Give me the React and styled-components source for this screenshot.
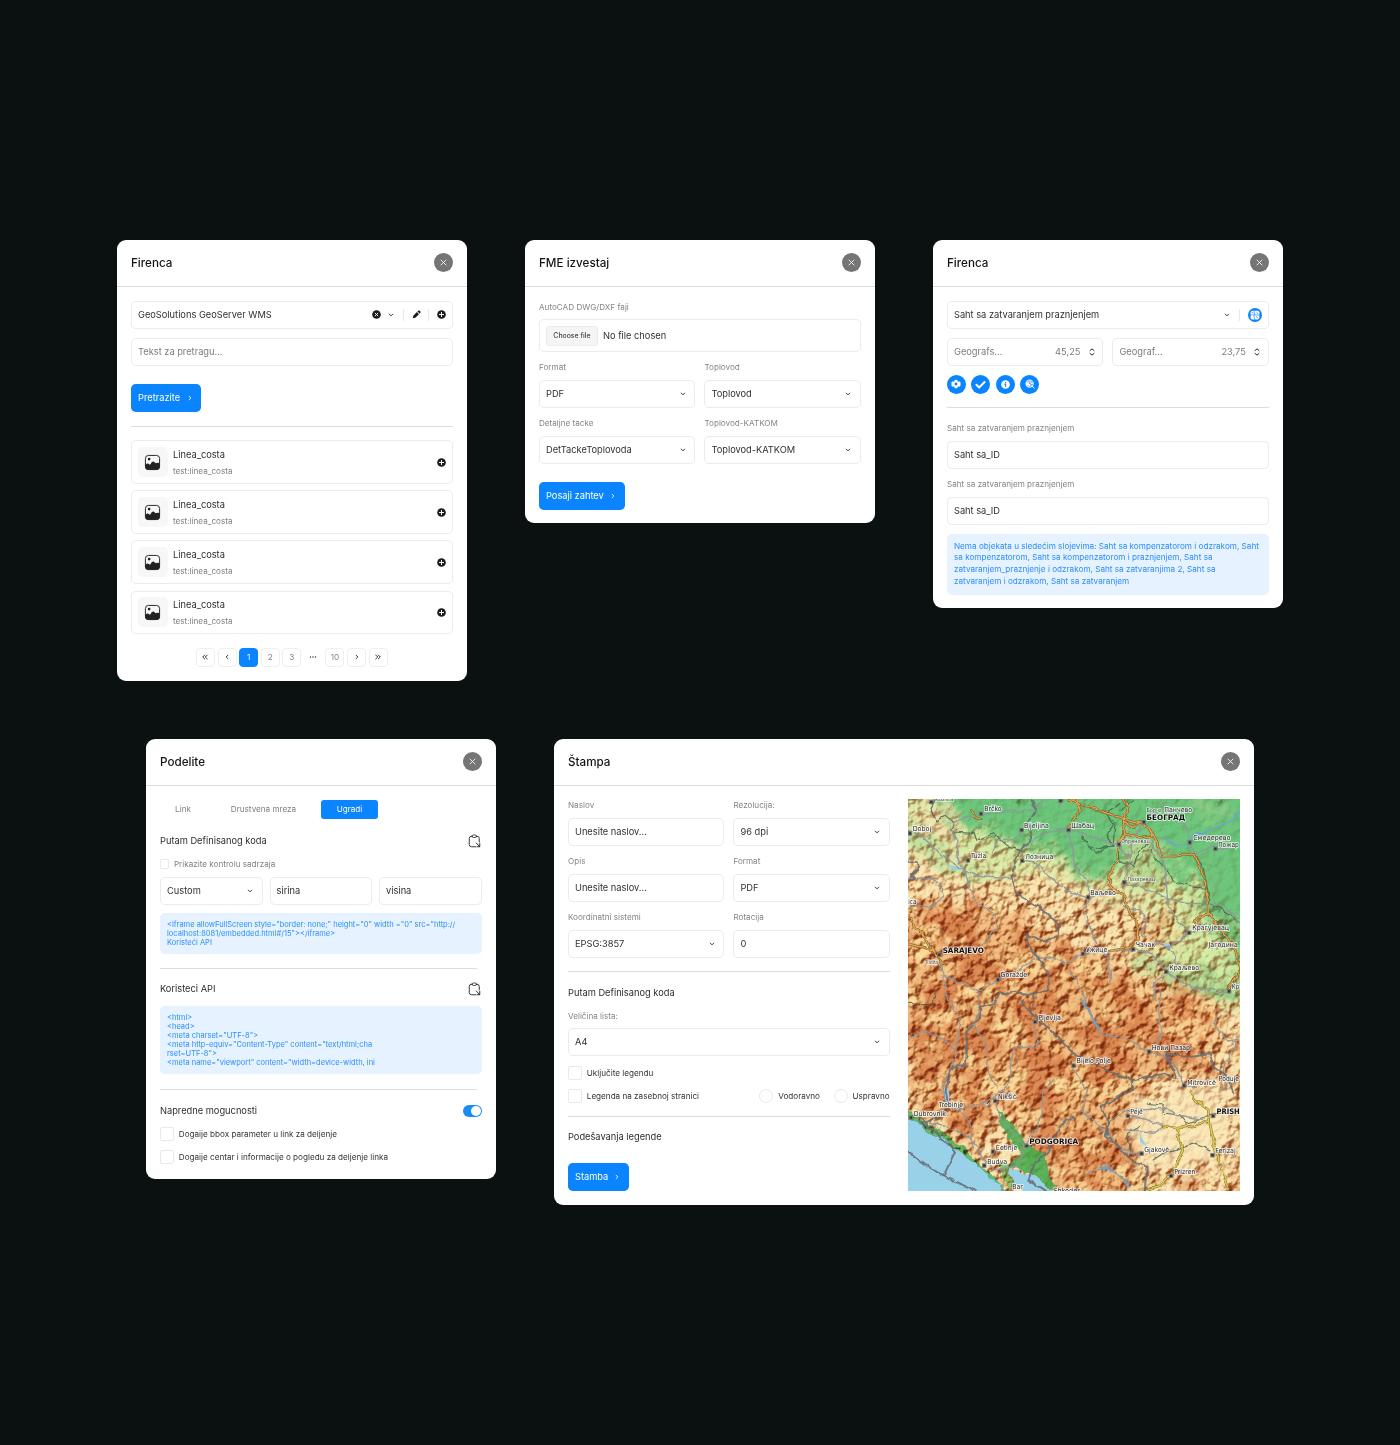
import React from "react";
import styled, { createGlobalStyle, css } from "styled-components";

const Global = createGlobalStyle`
  *, *::before, *::after { box-sizing: border-box; }
  body { margin: 0; background: #0b1011; }
  #root { font-family: Inter, "Liberation Sans", sans-serif; color: #333; }
`;

/* ---------- layout ---------- */
const Page = styled.main`
  width: 1400px;
  height: 1445px;
  padding-top: 240px;
  display: flex;
  flex-direction: column;
  gap: 58.5px;
  background: #0b1011;
  overflow: hidden;
`;
const Row = styled.section`
  display: flex;
  align-items: flex-start;
  gap: 58.4px;
  padding-left: ${(p) => p.$left}px;
`;
const Card = styled.article`
  width: ${(p) => p.$w || 349.6}px;
  height: ${(p) => p.$h}px;
  flex: none;
  background: #fff;
  border-radius: 9px;
`;
const Header = styled.header`
  height: 46.5px;
  padding: 0 14px;
  display: flex;
  align-items: center;
  justify-content: space-between;
  border-bottom: 1px solid #dcdcdc;
`;
const Title = styled.h2`
  margin: 0;
  font-size: 11.67px;
  line-height: 16px;
  font-weight: 500;
  color: #151515;
`;
const Body = styled.div`
  padding: 14px 14px 0;
  display: flex;
  flex-direction: column;
`;
const Columns = styled.div`
  display: grid;
  grid-template-columns: repeat(${(p) => p.$n || 2}, 1fr);
  column-gap: ${(p) => p.$gap || 9.3}px;
  row-gap: 9.33px;
  margin-top: ${(p) => p.$mt || 0}px;
`;
const Divider = styled.hr`
  border: 0;
  height: 1px;
  width: ${(p) => p.$w || "100%"};
  margin: ${(p) => p.$m || "14px 0"};
  background: #dcdcdc;
  flex: none;
`;
const Line = styled.div`
  display: flex;
  align-items: center;
  justify-content: ${(p) => (p.$spread ? "space-between" : "flex-start")};
  gap: ${(p) => p.$gap || 0}px;
  height: ${(p) => p.$h}px;
  margin-top: ${(p) => p.$mt || 0}px;
`;

/* ---------- form parts ---------- */
const Label = styled.div`
  height: 12px;
  margin-bottom: 6.67px;
  font-size: 8.14px;
  line-height: 12px;
  color: #858585;
  white-space: nowrap;
`;
const Box = styled.div`
  height: ${(p) => p.$h || 28}px;
  margin-top: ${(p) => p.$mt || 0}px;
  padding: 0 ${(p) => p.$pr || 8.5}px 0 6px;
  display: flex;
  align-items: center;
  border: 1px solid #ebebeb;
  border-radius: 4.7px;
  font-size: 9.27px;
  line-height: 14px;
  white-space: nowrap;
  color: ${(p) => (p.$muted ? "#7c7c7c" : "#303030")};
`;
const Grow = styled.span`
  flex: 1;
`;
const Value = styled.span`
  margin-right: 7.2px;
`;
const VRule = styled.i`
  width: 1px;
  height: 12px;
  background: #e9e9e9;
  margin: ${(p) => p.$m};
`;
const Spacer = styled.i`
  width: ${(p) => p.$w}px;
`;
const Button = styled.button`
  align-self: flex-start;
  width: ${(p) => p.$w}px;
  height: 28px;
  margin-top: ${(p) => p.$mt}px;
  padding: 0 8.5px 0 7px;
  border: 0;
  border-radius: 4.7px;
  background: #0a84ff;
  color: #fff;
  font: 400 9.27px/14px Inter, sans-serif;
  display: flex;
  align-items: center;
  justify-content: space-between;
  white-space: nowrap;
`;
const FileButton = styled.span`
  width: 52px;
  height: 20px;
  margin-right: 5px;
  border: 1px solid #ececec;
  border-radius: 2.5px;
  background: #f5f5f5;
  font-size: 6.9px;
  font-weight: 500;
  line-height: 18px;
  text-align: center;
  color: #444;
`;
const Heading = styled.h3`
  margin: 0;
  font-size: 9.27px;
  line-height: 14px;
  font-weight: 400;
  color: #2d2d2d;
  white-space: nowrap;
`;
const Small = styled.span`
  font-size: 8.14px;
  line-height: 12px;
  white-space: nowrap;
  color: ${(p) => (p.$muted ? "#7f7f7f" : "#333")};
`;
const Check = styled.i`
  width: ${(p) => p.$s || 14}px;
  height: ${(p) => p.$s || 14}px;
  flex: none;
  border: 1px solid #e9e9e9;
  border-radius: ${(p) => (p.$round ? "50%" : "2px")};
  margin-left: ${(p) => p.$ml || 0}px;
`;
const Info = styled.div`
  height: ${(p) => p.$h}px;
  margin-top: ${(p) => p.$mt}px;
  padding: 7px;
  border-radius: 4.7px;
  background: #e6f2ff;
  color: #2a8fff;
  font-size: ${(p) => p.$fs}px;
  line-height: ${(p) => p.$lh}px;
  white-space: pre;
`;
const Round = styled.span`
  width: ${(p) => p.$s}px;
  height: ${(p) => p.$s}px;
  flex: none;
  border: 0;
  padding: 0;
  border-radius: 50%;
  display: flex;
  align-items: center;
  justify-content: center;
  background: ${(p) => p.$bg || "#0a84ff"};
`;

/* ---------- result list ---------- */
const List = styled.div`
  display: flex;
  flex-direction: column;
  gap: 6.2px;
`;
const Item = styled.div`
  height: 43.9px;
  padding: 0 6px;
  display: flex;
  align-items: center;
  border: 1px solid #ebebeb;
  border-radius: 4.7px;
`;
const Thumb = styled.span`
  width: 30px;
  height: 30px;
  margin-right: 5px;
  padding-right: 1px;
  border-radius: 5px;
  background: #f7f7f7;
  display: flex;
  align-items: center;
  justify-content: center;
`;
const ItemText = styled.div`
  flex: 1;
  display: flex;
  flex-direction: column;
  gap: 4px;
  font-size: 9.27px;
  line-height: 13px;
  color: #2d2d2d;
`;

/* ---------- pager ---------- */
const Pager = styled.nav`
  display: flex;
  justify-content: center;
  gap: 2.6px;
  margin-top: 13.3px;
`;
const PageButton = styled.span`
  width: 19px;
  height: 19px;
  border-radius: 4px;
  border: 1px solid #efefef;
  font-size: 8.14px;
  color: #858585;
  display: flex;
  align-items: center;
  justify-content: center;
  ${(p) =>
    p.$active &&
    css`
      background: #0a84ff;
      border-color: #0a84ff;
      color: #fff;
    `}
  ${(p) =>
    p.$plain &&
    css`
      border-color: transparent;
    `}
`;

/* ---------- tabs and toggle ---------- */
const Tabs = styled.div`
  display: flex;
  height: 19px;
`;
const Tab = styled.span`
  width: ${(p) => p.$w}px;
  border-radius: 3px;
  font-size: 8.14px;
  line-height: 19px;
  text-align: center;
  white-space: nowrap;
  color: ${(p) => (p.$active ? "#fff" : "#7f7f7f")};
  background: ${(p) => (p.$active ? "#0a84ff" : "transparent")};
`;
const Toggle = styled.span`
  width: 19px;
  height: 12px;
  border-radius: 6px;
  padding: 1px;
  background: #1b8cf3;
  display: flex;
  justify-content: flex-end;
  &::after {
    content: "";
    width: 10px;
    height: 10px;
    border-radius: 50%;
    background: #fff;
  }
`;
const Split = styled.div`
  display: flex;
  gap: 18.4px;
  padding: 13.7px 14px 0;
`;
const Side = styled.div`
  width: 321.8px;
  display: flex;
  flex-direction: column;
`;
const MapSvg = styled.svg`
  display: block;
  width: 332px;
  height: 392px;
`;
const Relief = styled.g`
  mix-blend-mode: multiply;
`;

/* ---------- icons ---------- */
const Svg = ({ s = 9, vb = 24, children, ...rest }) => (
  <svg width={s} height={s} viewBox={`0 0 ${vb} ${vb}`} fill="none" color="#222" {...rest}>
    {children}
  </svg>
);
const stroke = { stroke: "currentColor", strokeLinecap: "round", strokeLinejoin: "round" };
const Chevron = ({ turn = 0, color = "#222" }) => (
  <Svg s={6} vb={12} color={color}>
    <path d="M2.500 4.200l3.500 3.500 3.500-3.500" transform={`rotate(${turn} 6 6)`} strokeWidth="1.800" {...stroke} />
  </Svg>
);
const Double = ({ turn = 0 }) => (
  <Svg s={8} vb={14}>
    <path d="M6.500 3.500L3 7l3.500 3.500M11 3.500L7.500 7l3.500 3.500" transform={`rotate(${turn} 7 7)`} strokeWidth="1.600" {...stroke} />
  </Svg>
);
const Spinner = () => (
  <Svg s={8} vb={16}>
    <path d="M4 5.200L8 1.600l4 3.600M4 10.800L8 14.400l4-3.600" strokeWidth="2" {...stroke} />
  </Svg>
);
const PlusCircle = () => (
  <Svg s={9}>
    <circle cx="12" cy="12" r="11.500" fill="#1c1c1c" />
    <path d="M12 6.500v11M6.500 12h11" stroke="#fff" strokeWidth="2.600" strokeLinecap="round" />
  </Svg>
);
const XCircle = () => (
  <Svg s={9}>
    <circle cx="12" cy="12" r="11.500" fill="#1c1c1c" />
    <path d="M8.500 8.500l7 7M15.500 8.500l-7 7" stroke="#fff" strokeWidth="2.600" strokeLinecap="round" />
  </Svg>
);
const Pencil = () => (
  <Svg s={9}>
    <path d="M2 22l1.500-7L13 5.500l5.500 5.500L9 20.500zM14.500 4l1.800-1.800a3.200 3.200 0 0 1 4.500 0l1 1a3.200 3.200 0 0 1 0 4.500L20 9.500z" fill="#1c1c1c" />
  </Svg>
);
const Picture = () => (
  <Svg s={17} vb={30}>
    <rect x="2.500" y="2.500" width="25" height="25" rx="5.500" stroke="#222" strokeWidth="1.700" />
    <circle cx="9" cy="9" r="2.400" fill="#222" />
    <path d="M2 20c2-3 5-4 7-2 1 1 2 .5 3-1 2-4 5-5 7-2 1 1.500 2 1.500 3.500 1 2.500-1 4 0 5.500 2v4a6 6 0 0 1-6 6H8a6 6 0 0 1-6-6z" fill="#222" />
  </Svg>
);
const Clipboard = () => (
  <Svg s={14} vb={28}>
    <path d="M8 4.500H7Q2.500 4.500 2.500 9v12q0 4.500 4.500 4.500h9M16 4.500h2q4.500 0 4.500 4.500v7" strokeWidth="1.800" {...stroke} />
    <path d="M8 4.500Q8 2 10.500 2h4Q17 2 17 4.500T14.500 7h-4Q8 7 8 4.500z" strokeWidth="1.500" {...stroke} />
    <path d="M16.500 18l6.500 7M23.500 19v6.500h-5" strokeWidth="1.900" {...stroke} />
  </Svg>
);
const Gear = () => (
  <Svg s={10}>
    <path
      d="M9.500 2.500h5l.8 3 2.500 1.400 3-.9 2.400 4.300-2 1.700 2 2-2.400 4.200-3-.8-2.500 1.500-.8 2.900h-5l-.8-2.900-2.500-1.500-3 .8L.8 14l2.200-2-2.200-1.700L3.200 6l3 .9 2.500-1.400z"
      fill="#fff"
      stroke="#fff"
      strokeLinejoin="round"
    />
    <circle cx="12" cy="12" r="3.400" fill="#0a84ff" />
  </Svg>
);
const Tick = () => (
  <Svg s={11}>
    <path d="M3 12.500l6 6L21 6.500" stroke="#fff" strokeWidth="4.200" strokeLinecap="round" strokeLinejoin="round" />
  </Svg>
);
const InfoIcon = () => (
  <Svg s={9}>
    <circle cx="12" cy="12" r="11.500" fill="#fff" />
    <path d="M10 11H12.500V17.500" stroke="#0a84ff" strokeWidth="2.800" strokeLinecap="round" strokeLinejoin="round" />
    <circle cx="12.200" cy="6.600" r="1.800" fill="#0a84ff" />
  </Svg>
);
const GlobeSearch = () => (
  <Svg s={10}>
    <circle cx="11" cy="11" r="10" fill="#fff" />
    <path d="M3 6c5 0 5 5 9 5s2 4 5 5M10 1.500c-2 4 4 4 9 4M5 18c2-4 5-2 6 2M7 3l11 16M13 7l7 3" stroke="#0a84ff" strokeWidth="1.300" />
    <circle cx="17" cy="17" r="3.600" fill="#fff" stroke="#0a84ff" strokeWidth="1.500" />
    <path d="M19.500 19.500l3 3" stroke="#fff" strokeWidth="2" strokeLinecap="round" />
  </Svg>
);
const Tiles = () => (
  <Svg s={10}>
    <rect x="1.500" y="1.500" width="21" height="21" rx="4" fill="#fff" />
    <path d="M11 1c-3 4 2 5 0 9S9 18 12 23M1 12c5-2 6 1 10 0s7 1 12 0M16 6l3 3M5 6l3 1M15 16l4 3" stroke="#0a84ff" strokeWidth="1.600" strokeLinecap="round" />
  </Svg>
);

const Close = () => (
  <Round as="button" $s={19} $bg="#757575" aria-label="Zatvori">
    <Svg s={7} vb={14} color="#fff">
      <path d="M2 2l10 10M12 2L2 12" strokeWidth="1.700" {...stroke} />
    </Svg>
  </Round>
);
const CardHeader = ({ children }) => (
  <Header>
    <Title>{children}</Title>
    <Close />
  </Header>
);
const Select = ({ children, mt }) => (
  <Box $mt={mt}>
    <Grow>{children}</Grow>
    <Chevron />
  </Box>
);
const Field = ({ label, children, plain }) => (
  <div>
    <Label>{label}</Label>
    {plain ? <Box>{children}</Box> : <Select>{children}</Select>}
  </div>
);
const Action = ({ children, ...rest }) => (
  <Button {...rest}>
    {children}
    <Chevron turn={-90} color="#fff" />
  </Button>
);

/* ---------- relief map ---------- */
const motorways = [
  "M510 27L540 40 590 58 635 75 670 85 720 98 745 112 760 135 790 197 830 198 885 190 905 240 925 330 925 372 965 425 1005 470 1020 540 985 600",
  "M668 27L688 50 670 88 675 133 720 140 757 138 745 112",
  "M528 27L541 60 525 90 507 115",
  "M672 92L700 112 720 98",
  "M675 133L655 165 655 210 630 250 628 285 672 322 690 365 715 400 712 450 690 470 625 480",
  "M24 370L40 410 75 440 98 480 70 472 24 462",
  "M98 480L130 520",
  "M218 62L225 82 245 88",
  "M925 372L895 380 885 400",
  "M870 905L890 935 925 960 930 1000 950 1090 985 1200",
  "M930 990L880 1008 830 1015 790 1008",
  "M830 1015L848 1080 825 1140 780 1190 740 1203",
];
const roads = [
  "M24 120L60 135 100 170 140 205 180 235 240 260 330 265",
  "M160 105L175 90 240 75 320 65 400 60 430 27",
  "M150 120L170 145 175 200 190 240 205 290 235 340 285 375 290 410 245 470",
  "M395 160L430 130 505 115 570 140 640 160 660 160",
  "M505 120L520 180 520 230 560 265 570 320 555 360 570 420 600 480 625 500 630 580",
  "M365 210L400 215 450 260 500 300 565 325",
  "M280 185L285 150 350 145 365 120",
  "M660 170L690 210 670 275 720 290 800 325 860 340 940 340 980 355 1018 390",
  "M755 160L790 210 800 290 805 350 840 400 870 430 920 400",
  "M565 325L600 315 650 300",
  "M550 490L500 520 450 500 400 510 360 540 290 570 240 605 130 555 118 500",
  "M550 490L620 485 700 478 760 495 800 545 870 590 985 605",
  "M805 465L830 500 825 540M760 455L810 470 850 445 870 430",
  "M670 350L720 360 740 390 725 440",
  "M760 630L765 570 800 545",
  "M24 262L60 262 120 275 130 320 90 350 24 345",
  "M130 555L140 630 180 680 170 790 130 890 135 930 180 960 210 1000 220 1080",
  "M510 540L545 600 575 680 600 730 690 750 745 785",
  "M745 785L800 800 830 830 850 885 890 890",
  "M400 700L410 740 410 770 340 775 330 880 280 925 200 955 130 950",
  "M285 940L310 1000 375 1065 420 1000 430 910 460 870",
  "M375 1065L350 1130 280 1140 255 1110 210 1040 140 1010 90 1000",
  "M520 830L560 900 545 960 580 990 610 1020",
  "M690 975L740 990 790 1008 760 1030 680 1020",
  "M725 1090L690 1090 640 1050 600 1010",
  "M960 670L940 700 985 750 1018 745 970 840 975 900",
  "M620 1000L680 960 720 960 800 955 830 975 920 990",
  "M230 600L240 640 225 700 260 780 265 850 290 890",
  "M780 600L775 670 785 740 750 785",
  "M870 160L890 190 940 170 985 180M730 95L700 150 690 210M870 160L860 110 800 60 780 27",
  "M560 1150L620 1130 690 1180M24 740L80 725 130 750 165 780",
];
const borders = [
  "M395 30L408 60 385 100 395 150 360 180 345 215 335 260 345 310 380 330 430 360 480 410 475 440 430 455 380 435 395 480 430 520 450 560 445 600 400 615",
  "M368 630L375 650 430 700 450 720 490 760 520 790 580 820 640 850 700 870 790 855 830 865",
  "M240 650L280 640 300 610 345 605 400 615 400 655",
  "M240 650L240 690 200 720 195 830 155 830 140 900 150 960 95 990 60 1000",
  "M700 870L700 900 640 930 605 945 625 1000 620 1040 660 1070 690 1110 740 1130 735 1203",
  "M24 1085L130 1160 165 1085 60 985M130 1160L230 1203",
  "M440 1090L405 1120 385 1170 440 1203",
  "M440 1090L480 1010 520 980",
  "M830 865L800 790 850 800 930 790 940 830 985 860 1000 910",
  "M24 215L50 215 55 240 35 255 45 262",
];
const thin = [
  "M105 30L90 60 110 90 135 75 165 100 150 125 220 130 235 150 280 130 320 165 365 180",
  "M570 170L600 175 640 165 620 140 640 100 620 70 660 40",
  "M760 170L755 190 800 240 820 270 870 290 920 295M885 190L910 230 930 330",
  "M700 30L660 60M925 335L985 370 1018 395",
  "M655 165L660 210 700 230 720 180 750 155",
  "M545 140L570 170 590 190 640 160 645 100",
  "M740 940L790 945 790 970 840 975 860 1000 930 975 1015 960M760 1110L790 1090 835 1080 880 1060 930 1080",
  "M24 640L100 640 105 610M690 1090L680 1030 720 1010",
];
const places = [
  ["Brčko", 253, 62, 52], ["Bijeljina", 372, 113, 75], ["Doboj", 38, 123, 56], ["Шабац", 514, 113, 69],
  ["Панчево", 793, 65, 84], ["Смедерево", 880, 151, 112], ["Пожар", 955, 170, 62], ["Tuzla", 213, 205, 46],
  ["Лозница", 376, 207, 84], ["Ваљево", 571, 315, 77], ["Крагујевац", 877, 421, 111], ["Јагодина", 926, 470, 88],
  ["Чачак", 708, 470, 58], ["Ужице", 558, 485, 64], ["Краљево", 808, 540, 90], ["Goražde", 302, 562, 80],
  ["ica", 25, 343, 24], ["Кр", 996, 596, 22], ["Pljevlja", 415, 690, 68], ["Нови Пазар", 756, 779, 115],
  ["Bijelo Polje", 530, 820, 103], ["Mitrovicë", 862, 884, 86], ["Poduje", 957, 872, 61], ["Nikšić", 294, 926, 55],
  ["Trebinje", 116, 951, 73], ["Dubrovnik", 41, 977, 97], ["Pejë", 691, 972, 38], ["Gjakovë", 733, 1085, 75],
  ["Ferizaj", 946, 1089, 62], ["Cetinje", 287, 1080, 65], ["Budva", 262, 1122, 60], ["Prizren", 823, 1152, 64],
  ["Bar", 337, 1197, 32], ["Shkoder", 460, 1208, 80],
];
const minor = [["Обреновац", 664, 159, 86], ["Лазаревац", 682, 272, 84], ["Борча", 740, 65, 46], ["Ilidža", 78, 523, 36], ["Kozica", 105, 33, 56]];
const capitals = [["БЕОГРАД", 740, 90, 116], ["SARAJEVO", 128, 489, 124], ["PODGORICA", 388, 1061, 147], ["PRISH", 950, 972, 70]];
const dots = [
  [243, 71], [365, 120], [30, 130], [506, 120], [870, 157], [947, 176], [204, 211], [367, 212], [565, 322], [868, 428],
  [700, 478], [549, 491], [799, 545], [294, 569], [988, 604], [406, 696], [748, 785], [521, 827], [853, 887], [286, 933],
  [33, 983], [684, 978], [725, 1091], [938, 1096], [279, 1085], [253, 1127], [814, 1158], [732, 96], [118, 494], [380, 1068],
  [940, 978], [673, 277], [657, 163], [482, 32], [94, 36],
];

const Place = styled.text`
  font-family: "DejaVu Sans", sans-serif;
  stroke: #fff;
  stroke-opacity: 0.7;
  stroke-linejoin: round;
  paint-order: stroke;
`;
const Names = ({ rows, size, weight, halo, fill }) =>
  rows.map(([t, x, y, w]) => (
    <Place key={t} x={x} y={y} textLength={w} lengthAdjust="spacingAndGlyphs" fontSize={size} fontWeight={weight} fill={fill} strokeWidth={halo}>
      {t}
    </Place>
  ));
const Paths = ({ d, ...rest }) => (
  <g fill="none" strokeLinejoin="round" strokeLinecap="round" {...rest}>
    {d.map((p) => (
      <path key={p} d={p} />
    ))}
  </g>
);

const ReliefMap = () => (
  <MapSvg viewBox="0 0 332 392">
    <defs>
      <filter id="soft" x="-20%" y="-20%" width="140%" height="140%"><feGaussianBlur stdDeviation="20" /></filter>
      <filter id="soft2" x="-20%" y="-20%" width="140%" height="140%"><feGaussianBlur stdDeviation="36" /></filter>
      <filter id="ragged" x="-5%" y="-5%" width="110%" height="110%">
        <feTurbulence type="fractalNoise" baseFrequency="0.07" numOctaves="3" seed="4" />
        <feDisplacementMap in="SourceGraphic" scale="9" xChannelSelector="R" yChannelSelector="G" />
      </filter>
      <filter id="rough" x="-10%" y="-10%" width="120%" height="120%">
        <feTurbulence type="fractalNoise" baseFrequency="0.05" numOctaves="4" seed="21" />
        <feDisplacementMap in="SourceGraphic" scale="38" xChannelSelector="R" yChannelSelector="G" />
      </filter>
      <filter id="wiggle" x="-5%" y="-5%" width="110%" height="110%">
        <feTurbulence type="fractalNoise" baseFrequency="0.11" numOctaves="2" seed="8" />
        <feDisplacementMap in="SourceGraphic" scale="6" xChannelSelector="R" yChannelSelector="G" />
      </filter>
      <filter id="peaks" x="0" y="0" width="100%" height="100%" colorInterpolationFilters="sRGB">
        <feTurbulence type="fractalNoise" baseFrequency="0.027" numOctaves="5" seed="12" />
        <feColorMatrix values="0 0 0 0 .86  0 0 0 0 .53  0 0 0 0 .32  7 0 0 0 -3" />
      </filter>
      <filter id="valleys" x="0" y="0" width="100%" height="100%" colorInterpolationFilters="sRGB">
        <feTurbulence type="fractalNoise" baseFrequency="0.033" numOctaves="4" seed="31" />
        <feColorMatrix values="0 0 0 0 1  0 0 0 0 .91  0 0 0 0 .68  0 8 0 0 -4.300" />
      </filter>
      <filter id="shade" x="0" y="0" width="100%" height="100%" colorInterpolationFilters="sRGB">
        <feTurbulence type="fractalNoise" baseFrequency="0.1" numOctaves="4" seed="7" result="n" />
        <feColorMatrix in="n" values="0 0 0 0 0 0 0 0 0 0 0 0 0 0 0 1 0 0 0 0" />
        <feDiffuseLighting surfaceScale="6" diffuseConstant="1.050" lightingColor="#fff">
          <feDistantLight azimuth="188" elevation="44" />
        </feDiffuseLighting>
        <feComponentTransfer>
          <feFuncR type="table" tableValues=".52 .70 .86 .98 1" />
          <feFuncG type="table" tableValues=".26 .48 .73 .94 1" />
          <feFuncB type="table" tableValues=".14 .36 .62 .87 1" />
        </feComponentTransfer>
      </filter>
      <mask id="hills">
        <rect width="332" height="392" fill="#fff" />
        <g filter="url(#rough)">
          <g transform="translate(-8 -9) scale(.33333)" filter="url(#soft)">
            <path d="M0 0H1060V640H880L760 470 860 420 820 360 600 350 400 270 200 290 0 260Z" fill="#aaa" />
            <path d="M60 0H1060V420L940 340 890 300 790 260 770 190 700 165 640 260 580 270 510 210 400 160 320 160 280 120 170 130Z" fill="#222" />
            <path d="M700 930L900 900 1000 960 960 1140 790 1130 690 1100Z" fill="#333" />
          </g>
        </g>
      </mask>
      <mask id="high">
        <g filter="url(#rough)">
          <g transform="translate(-8 -9) scale(.33333)" filter="url(#soft)">
            <path d="M0 380L120 330 300 350 480 450 620 500 760 600 900 600 960 700 1060 760V880L880 830 700 900 690 1100 760 1203H470L400 1040 300 920 220 1090 60 960 0 640Z" fill="#fff" />
            <path d="M850 1180L1030 1090V1220H830Z" fill="#fff" />
            <path d="M560 330L700 370 830 370 840 440 600 440Z" fill="#999" />
          </g>
        </g>
      </mask>
      <clipPath id="frame"><rect width="332" height="392" /></clipPath>
      <path id="sea" d="M0 975L30 985 60 1000 95 1030 130 1050 155 1075 185 1090 215 1110 250 1138 268 1170 300 1185 318 1220H0Z" />
    </defs>

    <rect width="332" height="392" fill="#fbe9bb" />
    <g filter="url(#rough)">
      <g transform="translate(-8 -9) scale(.33333)">
        <g filter="url(#soft2)">
          <path d="M-80 -80H1140V640H930L860 570 680 490 760 480 820 400 740 330 640 330 560 300 440 240 300 260 200 260 80 180 -60 120Z" fill="#d6efac" />
        </g>
        <g filter="url(#soft)">
          <path d="M60 -80H1140V420L940 340 890 300 800 230 770 190 700 165 640 250 580 270 510 210 400 160 320 160 280 120 170 120Z" fill="#6cc77b" />
          <path d="M640 150L760 150 800 240 760 300 690 260Z" fill="#b5dc98" />
          <path d="M850 27L960 27 960 90 880 80Z" fill="#8fd08c" />
          <path d="M890 180L960 200 960 330 1050 420 1050 600 970 450 910 370Z" fill="#74c47b" />
          <path d="M-60 60L60 110 130 190 200 230 300 250 200 270 90 200 -60 140Z" fill="#b9e3a0" />
          <path d="M30 40L130 60 150 130 190 180 280 210 200 210 120 150 50 90Z" fill="#f3e6b8" />
          <path d="M690 480L790 530 1040 590 1040 640 900 610 780 560Z" fill="#8acb85" />
          <path d="M-60 420L120 330 300 350 480 450 620 500 760 600 900 600 960 700 900 830 700 900 690 1100 760 1260H470L400 1040 300 920 220 1090 60 960 -60 640Z" fill="#f0b67a" opacity=".8" />
        </g>
      </g>
    </g>
    <g mask="url(#high)">
      <rect width="332" height="392" filter="url(#peaks)" opacity=".85" />
      <rect width="332" height="392" filter="url(#valleys)" opacity=".75" />
    </g>
    <g filter="url(#ragged)">
      <g transform="translate(-8 -9) scale(.33333)">
        <path d="M0 950L60 985 150 1040 200 1080 260 1140 310 1220H240L190 1110 60 1020 0 995Z" fill="#67bf68" />
        <path d="M300 1110L335 1130 350 1180 330 1200 300 1150Z" fill="#8cc975" />
      </g>
    </g>
    <Relief mask="url(#hills)" clipPath="url(#frame)">
      <g transform="rotate(37 166 196)">
        <rect x="-110" y="-90" width="552" height="572" filter="url(#shade)" />
      </g>
    </Relief>
    <g filter="url(#ragged)">
      <g transform="translate(-8 -9) scale(.33333)" fill="#98d1e8">
        <path d="M288 960L330 1000 375 1055 430 1090 440 1130 470 1200H420L390 1150 330 1130 360 1090 320 1040Z" fill="#43ac4e" opacity=".85" />
        <use href="#sea" stroke="#5fb287" strokeWidth="5" />
        <path d="M325 1135L360 1148 395 1155 425 1170 470 1220H380L350 1180Z" />
        <path d="M715 1035l14 12 8 20-14-6zM125 900l18-6 6 30-12 18zM250 930l20 4-8 10zM795 455l18 6-4 14-12-4zM140 222l30 8 14 8-20 2z" />
      </g>
    </g>
    <g filter="url(#wiggle)">
      <g transform="translate(-8 -9) scale(.33333)">
        <Paths d={["M790 150L830 165 870 162 880 135 940 120 985 95 1020 70", "M545 630L580 680 600 720M600 1130L650 1150 690 1190"]} stroke="#6fa3c9" strokeWidth="5" />
        <Paths d={thin} stroke="#41604a" strokeWidth="3.500" opacity=".8" />
        <Paths d={roads} stroke="#8f959b" strokeWidth="4.500" opacity=".9" />
        <Paths d={borders} stroke="#666b70" strokeWidth="6" opacity=".85" />
        <Paths d={motorways.slice(0, 9)} stroke="#7c5f2c" strokeWidth="8" />
        <Paths d={motorways.slice(0, 9)} stroke="#e5a44e" strokeWidth="4.200" />
        <Paths d={motorways.slice(9)} stroke="#8f7a2c" strokeWidth="8" />
        <Paths d={motorways.slice(9)} stroke="#e3cb58" strokeWidth="4.200" />
      </g>
    </g>
    <g transform="translate(-8 -9) scale(.33333)">
      {dots.map(([x, y]) => (
        <rect key={`${x}-${y}`} x={x - 5} y={y - 5} width="10" height="10" fill="#333" stroke="#777" strokeWidth="3" />
      ))}
      <Names rows={minor} size={16} halo={4} fill="#444" />
      <Names rows={places} size={21} halo={6} fill="#2b2b2b" />
      <Names rows={capitals} size={22.5} weight={700} halo={6} fill="#111" />
    </g>
  </MapSvg>
);

/* ---------- panels ---------- */
const SearchPanel = () => (
  <Card $h={440.5}>
    <CardHeader>Firenca</CardHeader>
    <Body>
      <Box $pr={6}>
        <Grow>GeoSolutions GeoServer WMS</Grow>
        <XCircle />
        <Spacer $w={7} />
        <Chevron />
        <VRule $m="0 8px 0 9px" />
        <Pencil />
        <VRule $m="0 8px 0 7px" />
        <PlusCircle />
      </Box>
      <Box $mt={9.3} $muted>Tekst za pretragu...</Box>
      <Action $w={70} $mt={18.7}>Pretrazite</Action>
      <Divider $m="13.500px 0 13.300px" />
      <List>
        {[0, 1, 2, 3].map((i) => (
          <Item key={i}>
            <Thumb><Picture /></Thumb>
            <ItemText>
              Linea_costa
              <Small $muted>test:linea_costa</Small>
            </ItemText>
            <PlusCircle />
          </Item>
        ))}
      </List>
      <Pager>
        <PageButton><Double /></PageButton>
        <PageButton><Chevron turn={90} /></PageButton>
        <PageButton $active>1</PageButton>
        <PageButton>2</PageButton>
        <PageButton>3</PageButton>
        <PageButton $plain>
          <Svg s={8} vb={16}>
            <path d="M3 8h.01M8 8h.01M13 8h.01" stroke="#222" strokeWidth="2.600" strokeLinecap="round" />
          </Svg>
        </PageButton>
        <PageButton>10</PageButton>
        <PageButton><Chevron turn={-90} /></PageButton>
        <PageButton><Double turn={180} /></PageButton>
      </Pager>
    </Body>
  </Card>
);

const ReportPanel = () => (
  <Card $h={283}>
    <CardHeader>FME izvestaj</CardHeader>
    <Body>
      <Label>AutoCAD DWG/DXF faji</Label>
      <Box $h={33}>
        <FileButton>Choose file</FileButton>
        No file chosen
      </Box>
      <Columns $mt={9}>
        <Field label="Format">PDF</Field>
        <Field label="Toplovod">Toplovod</Field>
        <Field label="Detaljne tacke">DetTackeToplovoda</Field>
        <Field label="Toplovod-KATKOM">Toplovod-KATKOM</Field>
      </Columns>
      <Action $w={86} $mt={18.5}>Posaji zahtev</Action>
    </Body>
  </Card>
);

const ObjectPanel = () => (
  <Card $h={368}>
    <CardHeader>Firenca</CardHeader>
    <Body>
      <Box $pr={6}>
        <Grow>Saht sa zatvaranjem praznjenjem</Grow>
        <Chevron />
        <VRule $m="0 8px 0 9px" />
        <Round $s={14}><Tiles /></Round>
      </Box>
      <Columns $mt={9.3}>
        <Box $muted $pr={6.5}><Grow>Geografs...</Grow><Value>45,25</Value><Spinner /></Box>
        <Box $muted $pr={6.5}><Grow>Geograf...</Grow><Value>23,75</Value><Spinner /></Box>
      </Columns>
      <Line $h={19} $gap={5.4} $mt={9}>
        <Round $s={19}><Gear /></Round>
        <Round $s={19}><Tick /></Round>
        <Round $s={19}><InfoIcon /></Round>
        <Round $s={19}><GlobeSearch /></Round>
      </Line>
      <Divider $m="12.800px 0 14.500px" />
      <Columns $n={1}>
        <Field label="Saht sa zatvaranjem praznjenjem" plain>Saht sa_ID</Field>
        <Field label="Saht sa zatvaranjem praznjenjem" plain>Saht sa_ID</Field>
      </Columns>
      <Info $h={61} $mt={9} $fs={8.16} $lh={11.7}>
        {"Nema objekata u sledećim slojevima: Saht sa kompenzatorom i odzrakom, Saht\nsa kompenzatorom, Saht sa kompenzatorom i praznjenjem, Saht sa\nzatvaranjem_praznjenje i odzrakom, Saht sa zatvaranjima 2, Saht sa\nzatvaranjem i odzrakom, Saht sa zatvaranjem"}
      </Info>
    </Body>
  </Card>
);

const SharePanel = () => (
  <Card $h={439.5}>
    <CardHeader>Podelite</CardHeader>
    <Body>
      <Tabs>
        <Tab $w={46}>Link</Tab>
        <Tab $w={115}>Drustvena mreza</Tab>
        <Tab $w={57} $active>Ugradi</Tab>
      </Tabs>
      <Line $spread $h={14} $mt={15.9}>
        <Heading>Putam Definisanog koda</Heading>
        <Clipboard />
      </Line>
      <Line $h={10} $gap={4.6} $mt={10.5}>
        <Check $s={9.3} />
        <Small $muted>Prikazite kontrolu sadrzaja</Small>
      </Line>
      <Columns $n={3} $gap={7} $mt={8}>
        <Select>Custom</Select>
        <Box>sirina</Box>
        <Box>visina</Box>
      </Columns>
      <Info $h={41} $mt={7.8} $fs={7.5} $lh={9}>
        {'<iframe allowFullScreen style="border: none;" height="0" width ="0" src="http://\nlocalhost:8081/embedded.html#/15"></iframe>\nKoristeći API'}
      </Info>
      <Divider $w="317px" $m="14px 0 0" />
      <Line $spread $h={14} $mt={13.7}>
        <Heading>Koristeci API</Heading>
        <Clipboard />
      </Line>
      <Info $h={68} $mt={9.5} $fs={7.5} $lh={9}>
        {'<html>\n<head>\n<meta charset="UTF-8">\n<meta http-equiv="Content-Type" content="text/html;cha\nrset=UTF-8">\n<meta name="viewport" content="width=device-width, ini'}
      </Info>
      <Divider $w="317px" $m="15px 0 0" />
      <Line $spread $h={14} $mt={13.7}>
        <Heading>Napredne mogucnosti</Heading>
        <Toggle />
      </Line>
      <Line $h={14} $gap={4.8} $mt={9}>
        <Check />
        <Small>Dogaije bbox parameter u link za deljenje</Small>
      </Line>
      <Line $h={14} $gap={4.8} $mt={9.3}>
        <Check />
        <Small>Dogaije centar i informacije o pogledu za deljenje linka</Small>
      </Line>
    </Body>
  </Card>
);

const PrintPanel = () => (
  <Card $w={699.8} $h={466}>
    <CardHeader>Štampa</CardHeader>
    <Split>
      <Side>
        <Columns>
          <Field label="Naslov" plain>Unesite naslov...</Field>
          <Field label="Rezolucija:">96 dpi</Field>
          <Field label="Opis" plain>Unesite naslov...</Field>
          <Field label="Format">PDF</Field>
          <Field label="Koordinatni sistemi">EPSG:3857</Field>
          <Field label="Rotacija" plain>0</Field>
        </Columns>
        <Divider $m="13px 0 0" />
        <Line $h={14} $mt={14.3}>
          <Heading>Putam Definisanog koda</Heading>
        </Line>
        <Columns $n={1} $mt={9.5}>
          <Field label="Veličina lista:">A4</Field>
        </Columns>
        <Line $h={14} $gap={4.8} $mt={9.3}>
          <Check />
          <Small>Uključite legendu</Small>
        </Line>
        <Line $h={14} $gap={4.8} $mt={9.3}>
          <Check />
          <Small>Legenda na zasebnoj stranici</Small>
          <Grow />
          <Check $round />
          <Small>Vodoravno</Small>
          <Check $round $ml={9} />
          <Small>Uspravno</Small>
        </Line>
        <Divider $m="13px 0 0" />
        <Line $h={14} $mt={13.4}>
          <Heading>Podešavanja legende</Heading>
        </Line>
        <Action $w={61} $mt={18.5}>Stamba</Action>
      </Side>
      <ReliefMap />
    </Split>
  </Card>
);

export default function App() {
  return (
    <>
      <Global />
      <Page>
        <Row $left={117}>
          <SearchPanel />
          <ReportPanel />
          <ObjectPanel />
        </Row>
        <Row $left={146}>
          <SharePanel />
          <PrintPanel />
        </Row>
      </Page>
    </>
  );
}
